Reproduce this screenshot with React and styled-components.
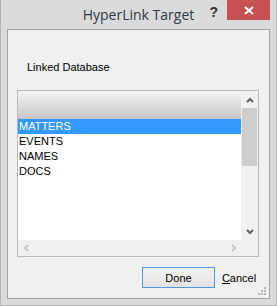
import styled, { createGlobalStyle } from 'styled-components';

const GlobalStyle = createGlobalStyle`
  html, body { margin: 0; padding: 0; background: #ffffff; }
  body { font-family: "Liberation Sans", Arial, sans-serif; }
`;

const Window = styled.div`
  width: 277px;
  height: 306px;
  box-sizing: border-box;
  background: #dadada;
  border: 1px solid #b1b1b1;
  border-top: none;
  display: flex;
  flex-direction: column;
`;

const TitleBar = styled.div`
  height: 29px;
  flex-shrink: 0;
  display: grid;
  grid-template-columns: 1fr auto 1fr;
`;

const Title = styled.div`
  grid-column: 2;
  padding-top: 5px;
  font-family: "Open Sans", "Noto Sans", sans-serif;
  font-size: 14px;
  line-height: 19px;
  color: #2f3a48;
`;

const Controls = styled.div`
  grid-column: 3;
  display: flex;
  justify-content: flex-end;
  align-items: flex-start;
  margin-right: 6px;
`;

const Help = styled.span`
  margin: 5px 9px 0 0;
  font-size: 14px;
  font-weight: bold;
  line-height: 15px;
  color: #333333;
`;

const CloseButton = styled.div`
  width: 43px;
  height: 20px;
  background: #c75050;
  display: flex;
  align-items: center;
  justify-content: center;
`;

const Client = styled.div`
  flex: 1;
  position: relative;
  margin: 0 6px 6px 6px;
  border: 1px solid #a3a3a3;
  background: #f0f0f0;
  display: flex;
  flex-direction: column;
`;

const Label = styled.div`
  margin: 31px 0 0 19px;
  font-size: 11px;
  line-height: 13px;
  color: #000000;
`;

const ListBox = styled.div`
  margin: 16px 0 0 9px;
  width: 242px;
  height: 167px;
  box-sizing: border-box;
  border: 1px solid #b9b9b9;
  background: #ffffff;
  display: grid;
  grid-template-columns: 1fr 17px;
  grid-template-rows: 1fr 16px;
  overflow: hidden;
`;

const ListContent = styled.div`
  display: flex;
  flex-direction: column;
`;

const ListHeader = styled.div`
  height: 28px;
  background: linear-gradient(#f3f3f3, #c7c7c7);
`;

const Row = styled.div`
  height: 15px;
  padding-left: 1px;
  font-size: 11px;
  line-height: 15px;
  color: ${p => (p.$selected ? '#ffffff' : '#000000')};
  background: ${p => (p.$selected ? '#3399ff' : 'transparent')};
`;

const VScroll = styled.div`
  background: #f0f0f0;
  display: flex;
  flex-direction: column;
`;

const ArrowBox = styled.div`
  height: 17px;
  flex-shrink: 0;
  display: flex;
  align-items: center;
  justify-content: center;
`;

const Thumb = styled.div`
  height: 58px;
  margin: 0 1px;
  background: #cdcdcd;
`;

const Track = styled.div`
  flex: 1;
`;

const HScroll = styled.div`
  background: #f0f0f0;
  display: flex;
  justify-content: space-between;
  align-items: center;
  padding: 0 4px 0 5px;
`;

const Corner = styled.div`
  background: #f0f0f0;
`;

const ButtonRow = styled.div`
  display: flex;
  justify-content: flex-end;
  gap: 2px;
  margin-top: 10px;
  padding-right: 8px;
`;

const DoneButton = styled.button`
  width: 73px;
  height: 21px;
  box-sizing: border-box;
  border: 1px solid #4f98e6;
  background: linear-gradient(#f2f2f2, #e3e3e3);
  font-family: "Liberation Sans", Arial, sans-serif;
  font-size: 11px;
  color: #000000;
  padding: 0;
`;

const FlatButton = styled.button`
  width: 44px;
  height: 21px;
  border: none;
  background: transparent;
  font-family: "Liberation Sans", Arial, sans-serif;
  font-size: 11px;
  color: #000000;
  padding: 0;
`;

const Grip = styled.svg`
  position: absolute;
  right: 3px;
  bottom: 3px;
`;

const rows = ['MATTERS', 'EVENTS', 'NAMES', 'DOCS'];

const Chevron = ({ dir, color }) => {
  const pts = {
    up: '1,5 4,2 7,5',
    down: '1,1 4,4 7,1',
    left: '5,1 2,4 5,7',
    right: '2,1 5,4 2,7',
  }[dir];
  const vertical = dir === 'up' || dir === 'down';
  return (
    <svg width={vertical ? 8 : 7} height={vertical ? 6 : 8}>
      <polyline points={pts} fill="none" stroke={color} strokeWidth="2" />
    </svg>
  );
};

export default function App() {
  return (
    <>
      <GlobalStyle />
      <Window>
        <TitleBar>
          <Title>HyperLink Target</Title>
          <Controls>
            <Help>?</Help>
            <CloseButton>
              <svg width="10" height="9">
                <path d="M1 1 L9 8 M9 1 L1 8" stroke="#ffffff" strokeWidth="2" />
              </svg>
            </CloseButton>
          </Controls>
        </TitleBar>
        <Client>
          <Label>Linked Database</Label>
          <ListBox>
            <ListContent>
              <ListHeader />
              {rows.map((r, i) => (
                <Row key={r} $selected={i === 0}>{r}</Row>
              ))}
            </ListContent>
            <VScroll>
              <ArrowBox><Chevron dir="up" color="#606060" /></ArrowBox>
              <Thumb />
              <Track />
              <ArrowBox><Chevron dir="down" color="#606060" /></ArrowBox>
            </VScroll>
            <HScroll>
              <Chevron dir="left" color="#c4c4c4" />
              <Chevron dir="right" color="#c4c4c4" />
            </HScroll>
            <Corner />
          </ListBox>
          <ButtonRow>
            <DoneButton>Done</DoneButton>
            <FlatButton><u>C</u>ancel</FlatButton>
          </ButtonRow>
          <Grip width="8" height="8">
            <g fill="#b8b8b8">
              <rect x="6" y="0" width="2" height="2" />
              <rect x="3" y="3" width="2" height="2" />
              <rect x="6" y="3" width="2" height="2" />
              <rect x="0" y="6" width="2" height="2" />
              <rect x="3" y="6" width="2" height="2" />
              <rect x="6" y="6" width="2" height="2" />
            </g>
          </Grip>
        </Client>
      </Window>
    </>
  );
}
